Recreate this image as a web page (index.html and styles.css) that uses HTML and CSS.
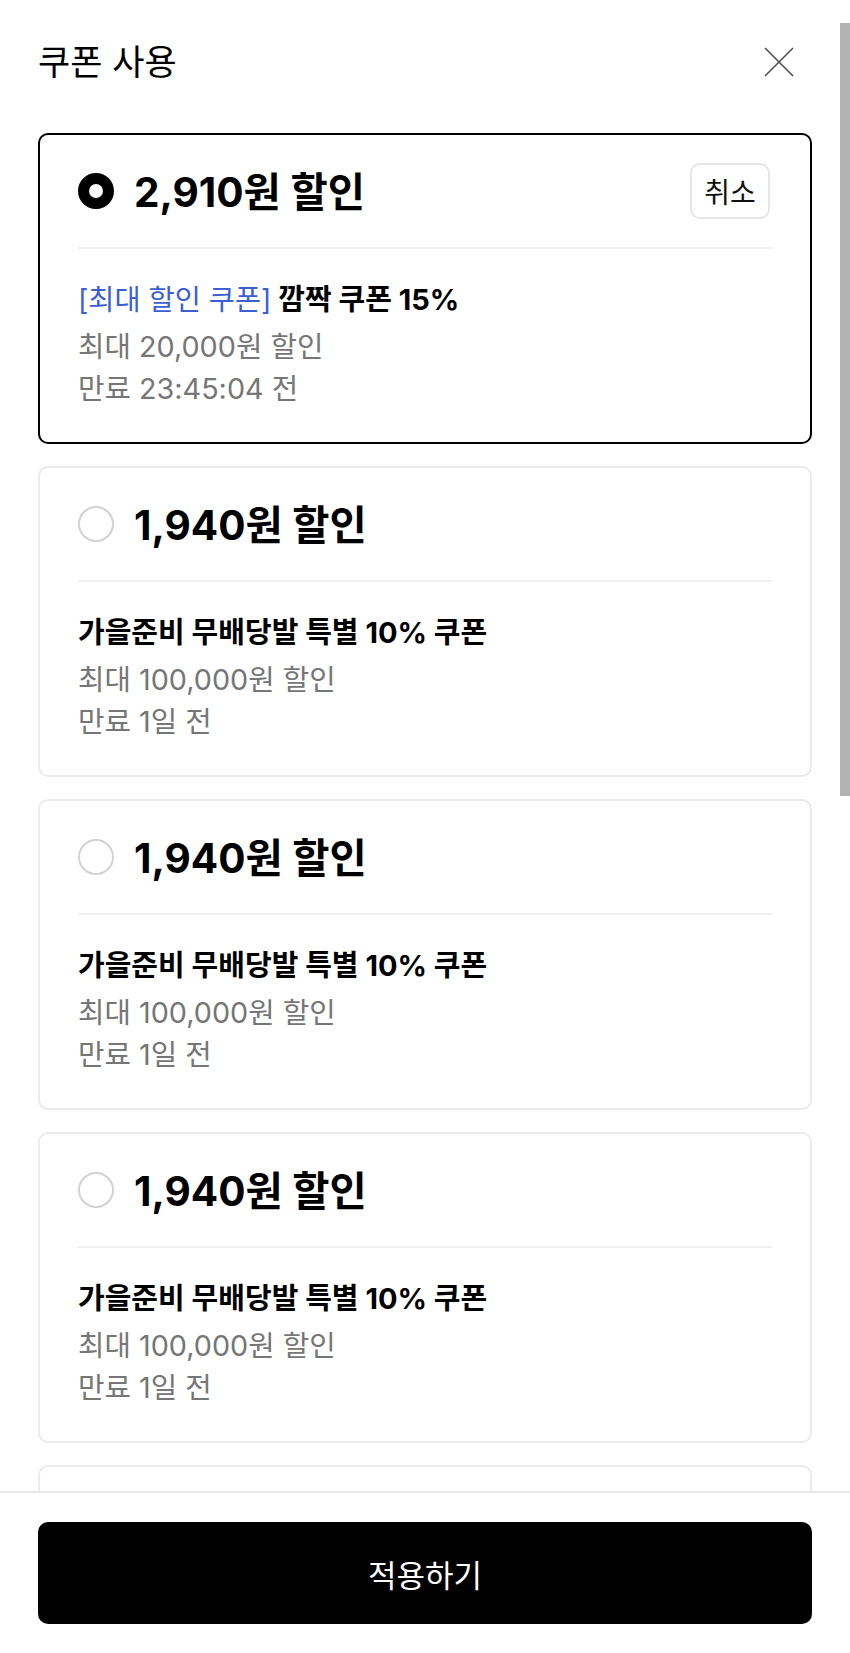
FILE: index.html
```html
<!DOCTYPE html>
<html lang="ko">
<head>
<meta charset="utf-8">
<title>쿠폰 사용</title>
<link rel="stylesheet" href="styles.css">
</head>
<body>
<div class="sheet">
  <header class="header">
    <h1 class="title">쿠폰 사용</h1>
    <button class="close" aria-label="닫기">
      <svg width="30" height="30" viewBox="0 0 30 30"><path d="M1 1 L29 29 M29 1 L1 29" stroke="#4a4a4a" stroke-width="1.5" fill="none"/></svg>
    </button>
  </header>
  <main class="list">
    <section class="card selected">
      <div class="card-head">
        <span class="radio checked"></span>
        <span class="amount">2,910원 할인</span>
        <button class="cancel">취소</button>
      </div>
      <div class="divider"></div>
      <div class="info">
        <p class="name"><span class="tag">[최대 할인 쿠폰]</span> 깜짝 쿠폰 15%</p>
        <p class="meta">최대 20,000원 할인</p>
        <p class="meta">만료 23:45:04 전</p>
      </div>
    </section>
    <section class="card">
      <div class="card-head">
        <span class="radio"></span>
        <span class="amount">1,940원 할인</span>
      </div>
      <div class="divider"></div>
      <div class="info">
        <p class="name">가을준비 무배당발 특별 10% 쿠폰</p>
        <p class="meta">최대 100,000원 할인</p>
        <p class="meta">만료 1일 전</p>
      </div>
    </section>
    <section class="card">
      <div class="card-head">
        <span class="radio"></span>
        <span class="amount">1,940원 할인</span>
      </div>
      <div class="divider"></div>
      <div class="info">
        <p class="name">가을준비 무배당발 특별 10% 쿠폰</p>
        <p class="meta">최대 100,000원 할인</p>
        <p class="meta">만료 1일 전</p>
      </div>
    </section>
    <section class="card">
      <div class="card-head">
        <span class="radio"></span>
        <span class="amount">1,940원 할인</span>
      </div>
      <div class="divider"></div>
      <div class="info">
        <p class="name">가을준비 무배당발 특별 10% 쿠폰</p>
        <p class="meta">최대 100,000원 할인</p>
        <p class="meta">만료 1일 전</p>
      </div>
    </section>
    <section class="card">
      <div class="card-head">
        <span class="radio"></span>
        <span class="amount">1,940원 할인</span>
      </div>
      <div class="divider"></div>
      <div class="info">
        <p class="name">가을준비 무배당발 특별 10% 쿠폰</p>
        <p class="meta">최대 100,000원 할인</p>
        <p class="meta">만료 1일 전</p>
      </div>
    </section>
  </main>
  <footer class="footer">
    <button class="apply">적용하기</button>
  </footer>
  <div class="scrollbar"></div>
</div>
</body>
</html>
```
FILE: styles.css
```css
* { box-sizing: border-box; }
html, body { margin: 0; padding: 0; background: #fff; }
body {
  font-family: "Inter", "Noto Sans CJK KR", "Noto Sans", sans-serif;
  color: #000;
}
.sheet {
  position: relative;
  height: 1653px;
  display: flex;
  flex-direction: column;
  overflow: hidden;
}
.header {
  display: flex;
  align-items: center;
  justify-content: space-between;
  height: 124px;
  padding: 0 56px 0 38px;
  flex: none;
}
.title {
  margin: 0;
  font-size: 35px;
  font-weight: 400;
  line-height: 44px;
}
.close {
  width: 30px;
  height: 30px;
  padding: 0;
  border: 0;
  background: none;
  display: flex;
  margin-top: -1px;
}
.list {
  flex: 1;
  overflow: hidden;
  padding: 9px 38px 0;
  display: flex;
  flex-direction: column;
  gap: 22px;
}
.card {
  flex: none;
  border: 2px solid #ebebeb;
  border-radius: 10px;
  padding: 28px 38px 32px;
}
.card.selected { border-color: #000; }
.card-head {
  display: flex;
  align-items: center;
  height: 56px;
}
.radio {
  width: 36px;
  height: 36px;
  border-radius: 50%;
  border: 2px solid #d2d2d2;
  flex: none;
}
.radio.checked { border: 11px solid #000; }
.amount {
  margin-left: 20px;
  font-size: 40.5px;
  font-weight: 700;
  flex: 1;
  margin-top: -3px;
}
.cancel {
  width: 80px;
  height: 56px;
  border: 2px solid #e6e6e6;
  border-radius: 10px;
  background: #fff;
  font-family: inherit;
  font-size: 28px;
  color: #111;
  padding: 0;
  margin-right: 2px;
}
.divider {
  height: 2px;
  background: #f0f0f0;
  margin-top: 28px;
}
.info { padding-top: 30px; }
.info p { margin: 0; line-height: 42px; }
.name { font-size: 29px; font-weight: 700; margin-bottom: 5px !important; }
.tag { font-size: 28.4px; color: #3b5fd3; font-weight: 400; }
.meta { font-size: 28.75px; color: #767676; }
.footer {
  flex: none;
  border-top: 2px solid #e8e8e8;
  padding: 29px 38px 29px;
  background: #fff;
}
.apply {
  width: 100%;
  height: 102px;
  border: 0;
  border-radius: 10px;
  background: #000;
  color: #fff;
  font-family: inherit;
  font-size: 31px;
  font-weight: 400;
}
.scrollbar {
  position: absolute;
  left: 840px;
  top: 23px;
  width: 10px;
  height: 773px;
  background: #b3b3b3;
}
```
